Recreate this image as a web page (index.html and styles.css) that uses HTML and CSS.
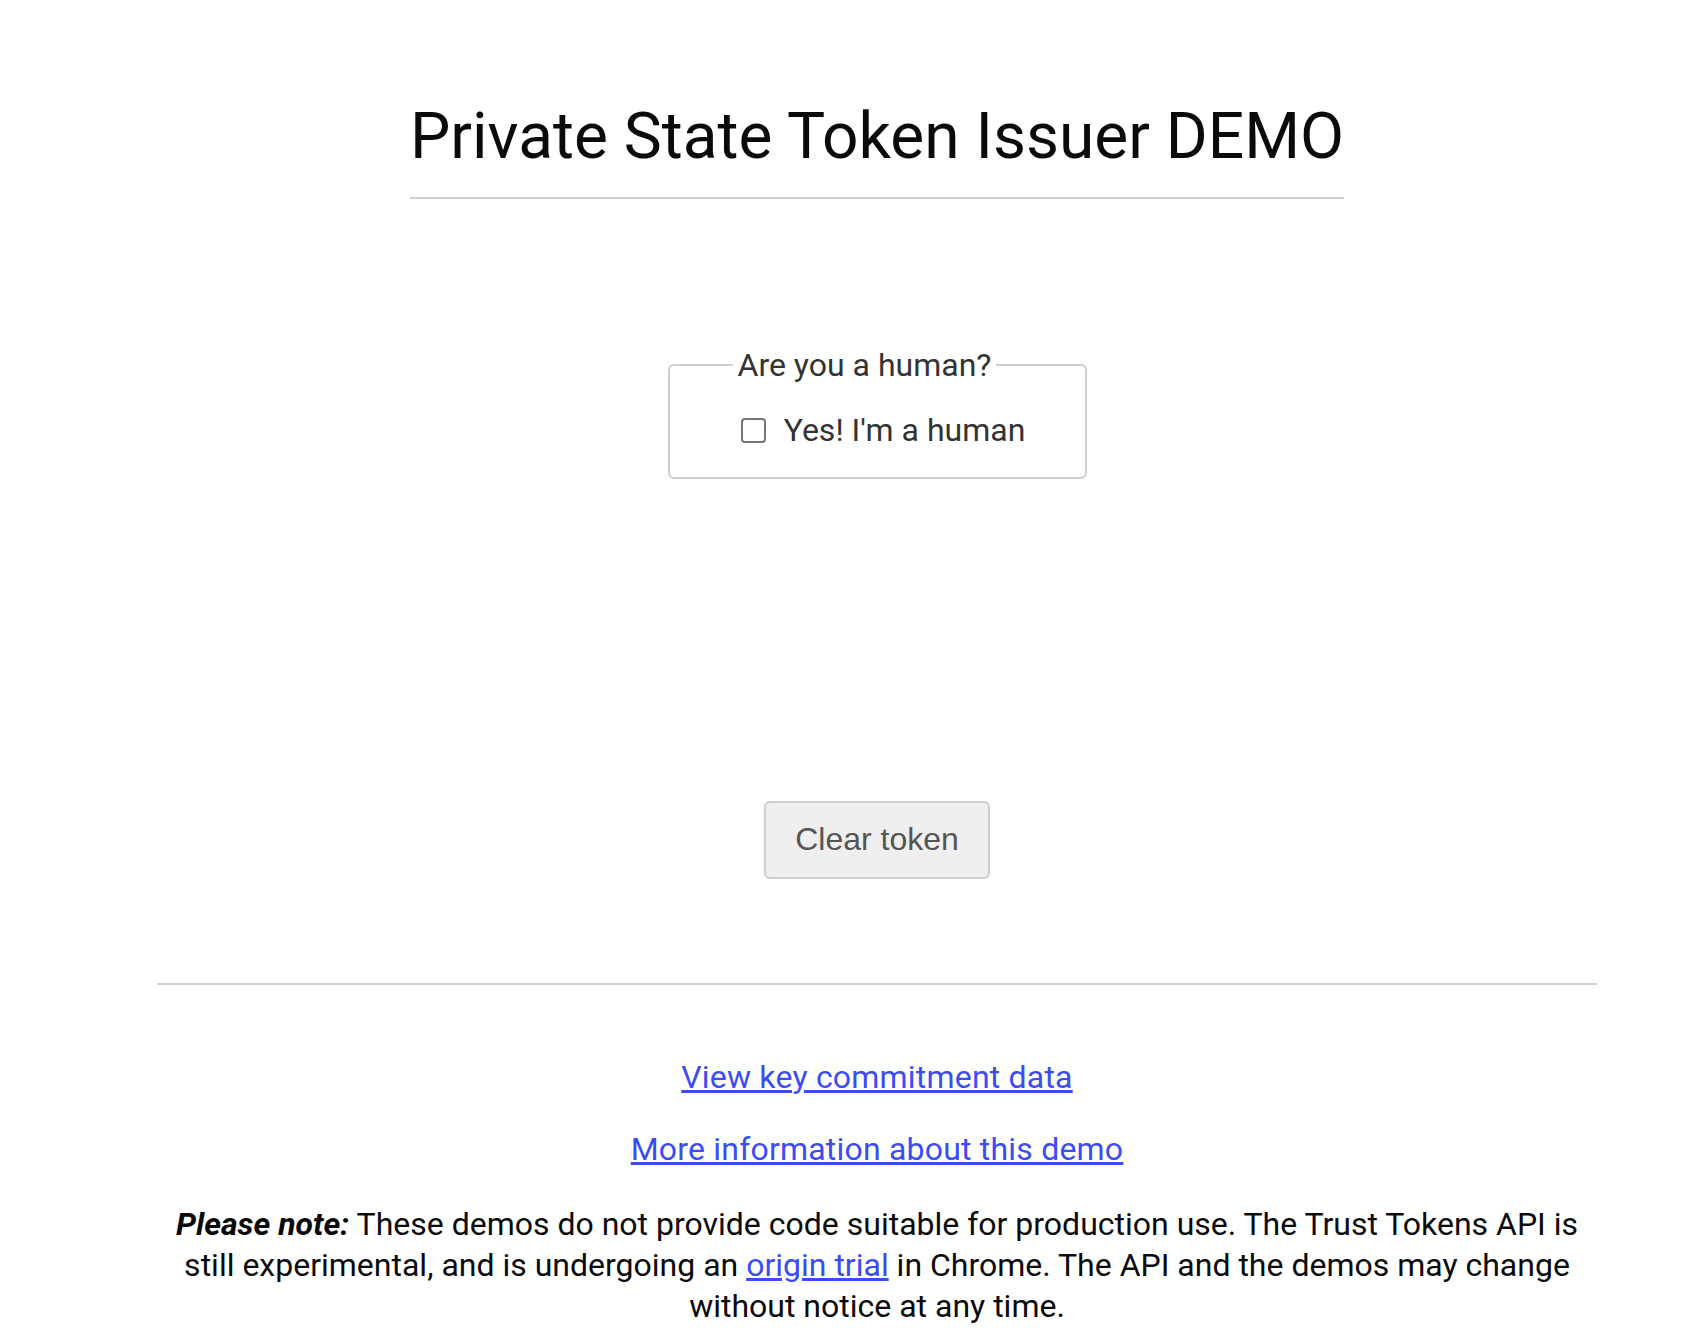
FILE: index.html
```html
<!DOCTYPE html>
<html lang="en">
<head>
    <meta charset="UTF-8">
    <meta name="viewport" content="width=device-width, initial-scale=1.0">
    <title>Private State Token Issuer DEMO</title>
    <link rel="stylesheet" href="styles.css">
</head>
<body>
    <main class="page">
        <header class="page-header">
            <h1>Private State Token Issuer DEMO</h1>
        </header>

        <section class="issuer">
            <fieldset class="human-check">
                <legend>Are you a human?</legend>
                <label class="check-row">
                    <input type="checkbox" id="human">
                    <span>Yes! I'm a human</span>
                </label>
            </fieldset>

            <button class="btn" id="clear">Clear token</button>
        </section>

        <footer class="page-footer">
            <p class="footer-link"><a href="#">View key commitment data</a></p>
            <p class="footer-link"><a href="#">More information about this demo</a></p>
            <p class="note"><strong><em>Please note:</em></strong> These demos do not provide code suitable for production use. The Trust Tokens API is still experimental, and is undergoing an <a href="#">origin trial</a> in Chrome. The API and the demos may change without notice at any time.</p>
        </footer>
    </main>
</body>
</html>
```

FILE: styles.css
```css
:root {
    --text: #0a0a0a;
    --label: #333;
    --line: #cfcfcf;
    --link: #3a4cf2;
}

* {
    margin: 0;
    padding: 0;
    box-sizing: border-box;
}

body {
    font-family: Roboto, 'Noto Sans', sans-serif;
    font-size: 32px;
    color: var(--text);
    background: #fff;
}

.page {
    width: 1440px;
    margin-left: 157px;
    text-align: center;
}

.page-header {
    padding-top: 98px;
}

h1 {
    display: inline-block;
    font-size: 64px;
    font-weight: 400;
    line-height: 77px;
    padding-bottom: 22px;
    border-bottom: 2px solid var(--line);
}

.issuer {
    display: flex;
    flex-direction: column;
    align-items: center;
    padding-top: 147px;
}

.human-check {
    width: 419px;
    padding: 0 0 26px 12px;
    border: 2px solid var(--line);
    border-radius: 6px;
    color: var(--label);
    text-align: center;
}

.human-check legend {
    margin-left: 51px;
    padding: 0 5px;
    line-height: 38px;
    text-align: left;
}

.check-row {
    display: inline-flex;
    align-items: center;
    gap: 18px;
    margin-top: 27px;
    line-height: 38px;
}

.check-row input {
    appearance: none;
    width: 25px;
    height: 25px;
    border: 2px solid #767676;
    border-radius: 4px;
    background: #fff;
}

.btn {
    margin-top: 322px;
    width: 226px;
    height: 78px;
    font-family: 'Liberation Sans', Arial, sans-serif;
    font-size: 32px;
    color: #555;
    background: #efefef;
    border: 2px solid #cdcdcd;
    border-radius: 6px;
    cursor: pointer;
}

.page-footer {
    margin-top: 104px;
    border-top: 2px solid var(--line);
    padding-top: 72px;
    line-height: 41px;
}

.footer-link {
    margin-bottom: 31px;
    letter-spacing: 0.2px;
}

a {
    color: var(--link);
}

.note {
    margin-top: 34px;
    padding: 0 10px;
}
```
